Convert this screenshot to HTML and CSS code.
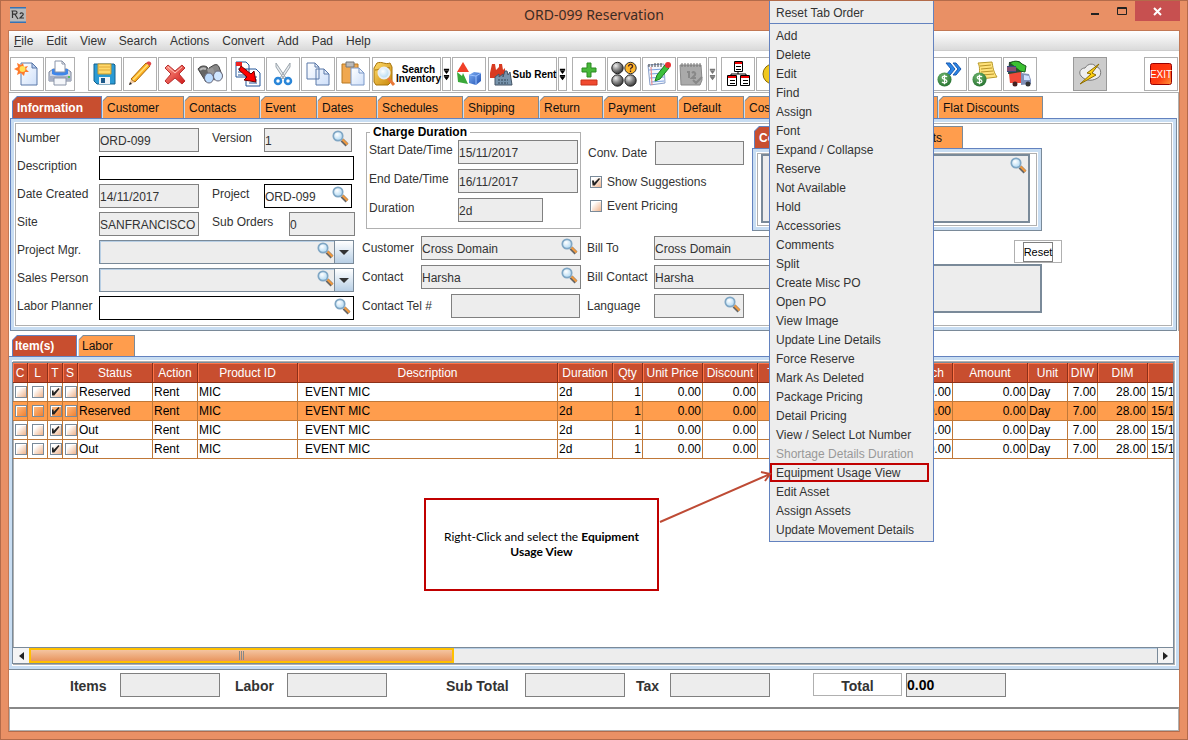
FILE: index.html
```html
<!DOCTYPE html>
<html lang="en">
<head>
<meta charset="utf-8">
<title>ORD-099 Reservation</title>
<link rel="stylesheet" href="styles.css">
</head>
<body>
<svg class="defs" aria-hidden="true">
  <defs>
    <linearGradient id="paper" x1="0" y1="0" x2="1" y2="1"><stop offset="0" stop-color="#fff"/><stop offset="1" stop-color="#cfe0fa"/></linearGradient>
    <linearGradient id="gold" x1="0" y1="0" x2="1" y2="1"><stop offset="0" stop-color="#ffdc6a"/><stop offset="1" stop-color="#c8860a"/></linearGradient>
    <linearGradient id="blue" x1="0" y1="0" x2="1" y2="1"><stop offset="0" stop-color="#7fb0f5"/><stop offset="1" stop-color="#1f4fb0"/></linearGradient>
    <linearGradient id="red" x1="0" y1="0" x2="1" y2="1"><stop offset="0" stop-color="#ff9a8a"/><stop offset="1" stop-color="#cf1818"/></linearGradient>
    <linearGradient id="exit" x1="0" y1="0" x2="1" y2="1"><stop offset="0" stop-color="#ff2a0a"/><stop offset=".6" stop-color="#ff3c12"/><stop offset="1" stop-color="#ff9a3a"/></linearGradient>
    <radialGradient id="ball" cx=".35" cy=".3" r=".75"><stop offset="0" stop-color="#eee"/><stop offset=".5" stop-color="#888"/><stop offset="1" stop-color="#333"/></radialGradient>
    <radialGradient id="green" cx=".4" cy=".3" r=".8"><stop offset="0" stop-color="#6fb56f"/><stop offset="1" stop-color="#1f6b2a"/></radialGradient>
    <radialGradient id="lens" cx=".4" cy=".35" r=".8"><stop offset="0" stop-color="#fff"/><stop offset="1" stop-color="#9fd0f0"/></radialGradient>
    <symbol id="find" viewBox="0 0 17 17"><path d="M10 10l5 5" stroke="#666" stroke-width="4"/><path d="M10.500 9.500l5 5" stroke="#f09a40" stroke-width="2.200"/><circle cx="6" cy="6" r="4.700" fill="url(#lens)" stroke="#7fa6c4" stroke-width="1.700"/></symbol>
    <symbol id="coin" viewBox="0 0 16 16"><circle cx="8" cy="8" r="7.500" fill="url(#green)"/><path d="M10.800 5.200C9 3.800 5.500 4.300 5.600 6.200c.1 2 5 1.300 5 3.600 0 2-3.500 2.300-5.300.8M8 3v10" fill="none" stroke="#fff" stroke-width="1.300"/></symbol>
  </defs>
</svg>
<main class="window">
  <header class="titlebar">
    <svg class="logo" viewBox="0 0 16 16"><path fill="#b9b9b9" d="M0 0h16v16H0z"/><path fill="#3573b5" d="M0 0h16v1.500H0zM0 14.500h16V16H0z"/><path d="M2.500 4v7M1.500 4h4c2 0 2 3 0 3.200H3M5 7.500l3 4.500M10 7c1-2 4-1 3 1l-3 3h4" fill="none" stroke="#333" stroke-width="1.200"/></svg>
    <h1 class="title">ORD-099 Reservation</h1>
    <div class="controls">
      <button class="ctl" aria-label="Minimize"><svg viewBox="0 0 27 20"><path fill="#222" d="M10 12h8v2h-8z"/></svg></button>
      <button class="ctl" aria-label="Maximize"><svg viewBox="0 0 27 20"><path fill="none" stroke="#222" d="M9.500 6.500h9v7h-9zM9.500 7.500h9"/></svg></button>
      <button class="ctl close" aria-label="Close"><svg viewBox="0 0 27 20"><path fill="none" stroke="#fff" stroke-width="2" d="M10 7l7 7M17 7l-7 7"/></svg></button>
    </div>
  </header>
  <div class="content">
    <nav class="menubar">
      <button><u>F</u>ile</button><button>Edit</button><button>View</button><button>Search</button><button>Actions</button><button>Convert</button><button>Add</button><button>Pad</button><button>Help</button>
    </nav>
    <div class="toolbar">
      <button class="tool" aria-label="New"><svg viewBox="0 0 32 32"><path d="M10 5h11l5 5v17H10z" fill="url(#paper)" stroke="#5a78a8"/><path d="M21 5v5h5z" fill="#b8cdf0" stroke="#5a78a8"/><path d="M12 5l1 4 4-1-2 3 3 3-4 0-1 4-3-3-4 2 1-4-4-2 4-2-1-4 4 2z" fill="#ff7a2a"/><circle cx="11.500" cy="11" r="3" fill="#ffe25a"/></svg></button>
      <button class="tool mid" aria-label="Print"><svg viewBox="0 0 28 32"><path d="M3 14l4-3h14l4 3v9H3z" fill="#d4d8e4" stroke="#7a8498"/><path d="M6 11h16v5c-4 2-12 2-16 0z" fill="#3f86ea"/><path d="M9 3h7l3 3v8H9z" fill="#fff" stroke="#8a94a8"/><path d="M16 3v3h3" fill="none" stroke="#8a94a8"/><path d="M3 18h22v5H3z" fill="#a8b0c4"/><path d="M8 20h12v7H8z" fill="#f4f6fa" stroke="#8a94a8"/><circle cx="23" cy="19" r="1" fill="#3c3"/></svg></button>
      <button class="tool g12" aria-label="Save"><svg viewBox="0 0 32 32"><path d="M5 6h20l1 1v19H8l-3-3z" fill="#2a9ad4" stroke="#14608c"/><path d="M9 6h13v10H9z" fill="#ffd96a" stroke="#c89a2a"/><path d="M10 9h11M10 12h11" stroke="#e0a83a"/><path d="M10 19h11v7H10z" fill="#f0f4f8"/><path d="M12 20h4v5h-4z" fill="#1f5a8a"/></svg></button>
      <button class="tool" aria-label="Edit"><svg viewBox="0 0 32 32"><path d="M5 27l2-6 4 3z" fill="#f0c8a0"/><path d="M5 27l1-3 2 2z" fill="#222"/><path d="M7 21L22 5l4 3-15 16z" fill="#ffb020" stroke="#a86a10"/><path d="M9 22L24 6.500" stroke="#ffe27a" stroke-width="1.500"/><path d="M22 5l2-1.500c2-.5 4 1.500 3 3L26 8z" fill="#e04848"/></svg></button>
      <button class="tool" aria-label="Delete"><svg viewBox="0 0 32 32"><path d="M9 7l7 6 7-6 3 3-6 6 6 7-3 3-7-6-7 6-3-3 6-7-6-6z" fill="url(#red)" stroke="#b83030"/><path d="M9 9l7 6 7-6" fill="none" stroke="#ffc2b8"/></svg></button>
      <button class="tool" aria-label="Find"><svg viewBox="0 0 32 32"><path d="M4 11c2-3 6-4 9-2l5 9-6 6z" fill="#666" stroke="#444"/><path d="M15 10l5-3c3-1 4 0 5 2l3 8-8 5z" fill="#888" stroke="#444"/><path d="M13 11l6-1 2 6-6 3z" fill="#999"/><ellipse cx="15" cy="20" rx="4.500" ry="5" fill="#bcdcff" stroke="#667"/><ellipse cx="24" cy="18" rx="4.500" ry="5" fill="#cfe6ff" stroke="#667"/><path d="M6 12c2-2 4-2 6-1" fill="none" stroke="#bbb" stroke-width="2"/></svg></button>
      <button class="tool g3" aria-label="Convert"><svg viewBox="0 0 32 32"><path d="M4 4h10l3 3v12H4zM14 11h10l4 4v13H14z" fill="#fff" stroke="#24569a"/><path d="M4 4h6v4H4z" fill="#e22"/><path d="M6 11h8M6 14h8M6 17h8M17 19h8M17 22h8M17 25h8" stroke="#24569a"/><path d="M9 8l10 8 3-3 2 11-12-2 3-3-8-7z" fill="#f00" stroke="#600"/></svg></button>
      <button class="tool" aria-label="Cut"><svg viewBox="0 0 32 32"><path d="M9 5l10 15-2 1L9 9zM23 5L13 20l2 1 8-12z" fill="#e8ecf0" stroke="#9aa4ac"/><ellipse cx="11" cy="23" rx="3" ry="3" fill="none" stroke="#2a86d8" stroke-width="2.500"/><ellipse cx="21" cy="23" rx="3" ry="3" fill="none" stroke="#2a86d8" stroke-width="2.500"/></svg></button>
      <button class="tool" aria-label="Copy"><svg viewBox="0 0 32 32"><path d="M5 5h8l4 4v12H5zM14 11h8l5 5v11H14z" fill="url(#paper)" stroke="#5a78a8"/><path d="M13 5v4h4M22 11v5h5" fill="none" stroke="#5a78a8"/></svg></button>
      <button class="tool" aria-label="Paste"><svg viewBox="0 0 32 32"><path d="M5 6h16v19H5z" fill="#f0a850" stroke="#b87820"/><path d="M9 4h8v5H9z" fill="#bbb" stroke="#777"/><path d="M14 10h8l5 5v12H14z" fill="url(#paper)" stroke="#7a98c8"/><path d="M22 10v5h5" fill="none" stroke="#7a98c8"/></svg></button>
      <button class="tool wide g1"><svg viewBox="0 0 24 32"><path d="M2 10l3-5c5-2 8 2 13 0l2 4v14l-4 4H4l-2-3z" fill="url(#gold)" stroke="#a8740a"/><path d="M3 12c4 0 6-3 15-2" fill="none" stroke="#a8740a"/><path d="M16 20l6 7" stroke="#e87838" stroke-width="3"/><circle cx="12" cy="15" r="5.500" fill="url(#lens)" stroke="#e8eef4" stroke-width="2"/></svg><span>Search<br>Inventory</span></button>
      <button class="tool arrow" aria-label="Inventory options"><svg viewBox="0 0 8 32"><path d="M1 10h6v2H1zM1 17h6v2H1z"/><path d="M1 12h6l-3 4zM1 19h6l-3 4z"/></svg></button>
      <button class="tool" aria-label="Shapes"><svg viewBox="0 0 32 32"><path d="M10 4l6 10H4z" fill="#f04028"/><path d="M4 14l5 4 1-3 5 11-10-2z" fill="#3aa83a"/><path d="M16 17l5-3 7 1v8l-5 4-7-2z" fill="url(#blue)"/><path d="M16 17l7 1 5-3M23 18v9" stroke="#9ac0ff" fill="none"/></svg></button>
      <button class="tool wide g1"><svg viewBox="0 0 24 32"><path d="M1 20V15l2-9h3l1 6 3-3V6h3l1 6 2-2v10z" fill="#d83a20"/><path d="M6 27V19l4-3v3l4-3v3l2-6h2l1 4 2-3 2 13z" fill="#7894ac" stroke="#456"/><path d="M9 22h10M9 25h10" stroke="#345" stroke-dasharray="2 1"/></svg><span>Sub Rent</span></button>
      <button class="tool arrow" aria-label="Sub rent options"><svg viewBox="0 0 8 32"><path d="M1 10h6v2H1zM1 17h6v2H1z"/><path d="M1 12h6l-3 4zM1 19h6l-3 4z"/></svg></button>
      <button class="tool g4" aria-label="Add or remove"><svg viewBox="0 0 32 32"><path d="M14 5h4v5h5v4h-5v5h-4v-5H9v-4h5z" fill="#48b83a" stroke="#2a8a20"/><path d="M8 22h16v5H8z" fill="#f04a30" stroke="#c83018"/></svg></button>
      <button class="tool" aria-label="Availability"><svg viewBox="0 0 32 32"><g fill="url(#ball)" stroke="#222"><circle cx="9.500" cy="10" r="5.700"/><circle cx="9.500" cy="22.500" r="5.700"/><circle cx="22.500" cy="22.500" r="5.700"/></g><circle cx="22.500" cy="10" r="5.700" fill="#ffb62a" stroke="#333"/><path d="M20.500 8.500c0-3 4.500-2.500 4 0-.3 1.500-2 1.200-2 3M22.500 12.500V14" fill="none" stroke="#422" stroke-width="1.300"/></svg></button>
      <button class="tool" aria-label="Notes"><svg viewBox="0 0 32 32"><path d="M5 7l16-1 1 19-15 2z" fill="#f4f8ff" stroke="#8aa0c8"/><path d="M6 12l15-1M7 16l14-1M7 20l14-1M8 24l13-1" stroke="#7aa0e0"/><path d="M6 6v3M9 6v3M12 5v4M15 5v4M18 5v4" stroke="#444"/><path d="M8 9l1 18" stroke="#f08080"/><path d="M12 23l2-6 8-10 4 3-9 11z" fill="#3cc03c" stroke="#1a7a1a"/><circle cx="25" cy="7" r="3" fill="#e83030"/></svg></button>
      <button class="tool mid" aria-label="Calendar" disabled><svg viewBox="0 0 28 32"><path d="M2 7h21l1 15-2 5H3z" fill="#aaa" stroke="#888"/><path d="M4 5v4M7 5v4M10 5v4M13 5v4M16 5v4M19 5v4M22 5v4" stroke="#777"/><path d="M9 14h2v6M14 15c2-2 4 0 3 2l-3 3h4M15 22l3 3 6-6" fill="none" stroke="#888" stroke-width="2"/></svg></button>
      <button class="tool arrow off" aria-label="Calendar options" disabled><svg viewBox="0 0 8 32"><path d="M1 10h6v2H1zM1 17h6v2H1z"/><path d="M1 12h6l-3 4zM1 19h6l-3 4z"/></svg></button>
      <button class="tool g3" aria-label="Hierarchy"><svg viewBox="0 0 32 32"><path d="M16 13v3M9 18v-2h15v2" fill="none" stroke="#000"/><path d="M12.500 3.500h8v10h-8zM5.500 17.500h9v10h-9zM18.500 17.500h9v10h-9z" fill="#fff" stroke="#000"/><path d="M13 4h7v2h-7zM6 18h8v2H6zM19 18h8v2h-8z" fill="#e00"/><path d="M14 8.500h5M14 11.500h5M8 22.500h5M8 25.500h5M21 22.500h5M21 25.500h5" stroke="#000"/></svg></button>
      <button class="tool" aria-label="Costs"><svg viewBox="0 0 32 32"><circle cx="16" cy="16" r="10" fill="#f0c820" stroke="#8a6a00"/></svg></button>
      <span class="spacer"></span>
      <button class="tool" aria-label="Transfer charges"><svg viewBox="0 0 32 32"><path d="M12 5h4l5 6-5 6h-4l5-6zM19 5h3l5 6-5 6h-3l5-6z" fill="#2a86e8" stroke="#1a5ab0"/><use href="#coin" x="3" y="14" width="15" height="15"/></svg></button>
      <button class="tool" aria-label="Price list"><svg viewBox="0 0 32 32"><path d="M9 5l14-1c1 5 1 9 5 15l-16 2c-3-6 0-11-3-16z" fill="#ffe27a" stroke="#b89a2a"/><path d="M11 8l11-1M12 11l11-1M12 14l12-1M13 17l12-1" stroke="#b8942a"/><use href="#coin" x="3" y="14" width="15" height="15"/></svg></button>
      <button class="tool" aria-label="Shipping"><svg viewBox="0 0 32 32"><path d="M5 4l10-1 5 5-3 8H4z" fill="#2a4a3a"/><path d="M6 5c5-3 9-2 12 1l4 2-1 6-5-1z" fill="#3ac030" stroke="#1a5a1a"/><path d="M3 8h9v6H3z" fill="#334a80"/><path d="M3 10h9M3 12h9" stroke="#e05060"/><path d="M5 16l12-2v11H6z" fill="#f04a3a"/><path d="M17 15l8 1 2 6v4l-10 1z" fill="#8090b8"/><path d="M20 17l5 1 1 4h-6z" fill="#cfe0ff"/><circle cx="11" cy="26" r="2.500" fill="#422"/><circle cx="24" cy="26" r="2.500" fill="#333"/></svg></button>
      <button class="tool pressed g35" aria-label="Refresh"><svg viewBox="0 0 32 32"><path d="M7 18c-3-4 0-8 4-8 3-5 9-5 11-1 5 0 6 7 3 10-5 4-13 5-18-1z" fill="#eee" stroke="#777"/><path d="M25 6L13 15l4 1-11 10 16-9-4-2z" fill="#ffd010" stroke="#8a6a00"/></svg></button>
      <button class="tool g36" aria-label="Exit"><svg viewBox="0 0 32 32"><rect x="5.500" y="5.500" width="21" height="21" rx="2" fill="url(#exit)" stroke="#900"/><text x="16" y="20" class="exit-text">EXIT</text></svg></button>
    </div>

    <section class="upper">
      <div class="tabs main-tabs" role="tablist">
        <button class="tab active w90">Information</button><button class="tab w82">Customer</button><button class="tab w76">Contacts</button><button class="tab w57">Event</button><button class="tab w60">Dates</button><button class="tab w86">Schedules</button><button class="tab w76">Shipping</button><button class="tab w64">Return</button><button class="tab w75">Payment</button><button class="tab w66">Default</button><button class="tab w96">Costs</button><button class="tab w98" aria-label="More"></button><button class="tab w105">Flat Discounts</button>
      </div>
      <div class="panel form">
        <div class="col-left">
          <div class="row"><label for="number">Number</label><input id="number" class="box w100" value="ORD-099" readonly><label class="second" for="version">Version</label><div class="box pick w88"><input id="version" value="1" readonly><svg><use href="#find"/></svg></div></div>
          <div class="row"><label for="desc">Description</label><input id="desc" class="box edit wfull"></div>
          <div class="row"><label for="created">Date Created</label><input id="created" class="box w100" value="14/11/2017" readonly><label class="second" for="project">Project</label><div class="box edit pick w88"><input id="project" value="ORD-099"><svg><use href="#find"/></svg></div></div>
          <div class="row"><label for="site">Site</label><input id="site" class="box w100" value="SANFRANCISCO" readonly><label class="second third" for="sub">Sub Orders</label><input id="sub" class="box w66" value="0" readonly></div>
          <div class="row"><label for="mgr">Project Mgr.</label><div class="box pick combo wfull"><input id="mgr" readonly><svg><use href="#find"/></svg><button class="drop" aria-label="Choose project manager"></button></div></div>
          <div class="row"><label for="sales">Sales Person</label><div class="box pick combo wfull"><input id="sales" readonly><svg><use href="#find"/></svg><button class="drop" aria-label="Choose sales person"></button></div></div>
          <div class="row"><label for="planner">Labor Planner</label><div class="box edit pick wfull"><input id="planner"><svg><use href="#find"/></svg></div></div>
        </div>
        <div class="col-right">
          <div class="top">
            <fieldset class="charge"><legend>Charge Duration</legend>
              <div class="row"><label for="start">Start Date/Time</label><input id="start" class="box w120" value="15/11/2017" readonly></div>
              <div class="row"><label for="end">End Date/Time</label><input id="end" class="box w120" value="16/11/2017" readonly></div>
              <div class="row"><label for="dur">Duration</label><input id="dur" class="box w85" value="2d" readonly></div>
            </fieldset>
            <div class="options">
              <div class="row conv"><label for="conv">Conv. Date</label><input id="conv" class="box w89" readonly></div>
              <label class="check"><input type="checkbox" checked>Show Suggestions</label>
              <label class="check"><input type="checkbox">Event Pricing</label>
            </div>
            <div class="comments">
              <div class="tabs"><button class="tab active w66">Com.</button><button class="tab w143 end">Events</button></div>
              <div class="panel notes"><div class="area"><textarea aria-label="Comments" readonly></textarea><svg><use href="#find"/></svg></div></div>
            </div>
          </div>
          <div class="bottom">
            <div class="cust">
              <div class="row"><label for="cust">Customer</label><div class="box pick w160"><input id="cust" value="Cross Domain" readonly><svg><use href="#find"/></svg></div></div>
              <div class="row"><label for="contact">Contact</label><div class="box pick w160"><input id="contact" value="Harsha" readonly><svg><use href="#find"/></svg></div></div>
              <div class="row"><label class="long" for="tel">Contact Tel #</label><input id="tel" class="box w129" readonly></div>
            </div>
            <div class="bill">
              <div class="row"><label for="bill">Bill To</label><input id="bill" class="box w160" value="Cross Domain" readonly></div>
              <div class="row"><label for="billc">Bill Contact</label><input id="billc" class="box w160" value="Harsha" readonly></div>
              <div class="row"><label for="lang">Language</label><div class="box pick w90"><input id="lang" readonly><svg><use href="#find"/></svg></div></div>
            </div>
            <div class="extra">
              <button class="reset"><span>Reset</span></button>
              <textarea class="memo" aria-label="Memo" readonly></textarea>
            </div>
          </div>
        </div>
      </div>
    </section>

    <section class="lower">
      <div class="tabs"><button class="tab active w65">Item(s)</button><button class="tab w57">Labor</button></div>
      <div class="panel items">
        <div class="viewport">
          <table class="grid">
            <colgroup><col class="c15"><col class="c20"><col class="c15"><col class="c15"><col class="c75"><col class="c45"><col class="c100"><col class="c260"><col class="c55"><col class="c30"><col class="c60"><col class="c55"><col class="c45"><col class="c75"><col class="c75"><col class="c75"><col class="c40"><col class="c30"><col class="c50"><col class="c75"></colgroup>
            <thead><tr><th>C</th><th>L</th><th>T</th><th>S</th><th>Status</th><th>Action</th><th>Product ID</th><th>Description</th><th>Duration</th><th>Qty</th><th>Unit Price</th><th>Discount</th><th>Total</th><th></th><th>Price Each</th><th>Amount</th><th>Unit</th><th>DIW</th><th>DIM</th><th></th></tr></thead>
            <tbody>
              <tr><td><input type="checkbox" aria-label="C"></td><td><input type="checkbox" aria-label="L"></td><td><input type="checkbox" aria-label="T" checked></td><td><input type="checkbox" aria-label="S"></td><td>Reserved</td><td>Rent</td><td>MIC</td><td class="indent">EVENT MIC</td><td>2d</td><td class="n">1</td><td class="n">0.00</td><td class="n">0.00</td><td></td><td></td><td class="n">0.00</td><td class="n">0.00</td><td>Day</td><td class="n">7.00</td><td class="n">28.00</td><td class="date">15/11/2017</td></tr>
              <tr class="selected"><td><input type="checkbox" aria-label="C"></td><td><input type="checkbox" aria-label="L"></td><td><input type="checkbox" aria-label="T" checked></td><td><input type="checkbox" aria-label="S"></td><td>Reserved</td><td>Rent</td><td>MIC</td><td class="indent">EVENT MIC</td><td>2d</td><td class="n">1</td><td class="n">0.00</td><td class="n">0.00</td><td></td><td></td><td class="n">0.00</td><td class="n">0.00</td><td>Day</td><td class="n">7.00</td><td class="n">28.00</td><td class="date">15/11/2017</td></tr>
              <tr><td><input type="checkbox" aria-label="C"></td><td><input type="checkbox" aria-label="L"></td><td><input type="checkbox" aria-label="T" checked></td><td><input type="checkbox" aria-label="S"></td><td>Out</td><td>Rent</td><td>MIC</td><td class="indent">EVENT MIC</td><td>2d</td><td class="n">1</td><td class="n">0.00</td><td class="n">0.00</td><td></td><td></td><td class="n">0.00</td><td class="n">0.00</td><td>Day</td><td class="n">7.00</td><td class="n">28.00</td><td class="date">15/11/2017</td></tr>
              <tr><td><input type="checkbox" aria-label="C"></td><td><input type="checkbox" aria-label="L"></td><td><input type="checkbox" aria-label="T" checked></td><td><input type="checkbox" aria-label="S"></td><td>Out</td><td>Rent</td><td>MIC</td><td class="indent">EVENT MIC</td><td>2d</td><td class="n">1</td><td class="n">0.00</td><td class="n">0.00</td><td></td><td></td><td class="n">0.00</td><td class="n">0.00</td><td>Day</td><td class="n">7.00</td><td class="n">28.00</td><td class="date">15/11/2017</td></tr>
            </tbody>
          </table>
        </div>
        <div class="scroll">
          <button class="step left" aria-label="Scroll left"></button>
          <div class="track"><div class="thumb"><i></i><i></i><i></i></div></div>
          <button class="step right" aria-label="Scroll right"></button>
        </div>
      </div>
    </section>

    <footer class="totals">
      <label for="t1">Items</label><input id="t1" class="box w100" readonly>
      <label for="t2" class="lab">Labor</label><input id="t2" class="box w100" readonly>
      <label for="t3" class="subt">Sub Total</label><input id="t3" class="box w100" readonly>
      <label for="t4" class="tax">Tax</label><input id="t4" class="box w100" readonly>
      <button class="total">Total</button><input class="box w100 sum" aria-label="Total" value="0.00" readonly>
    </footer>
    <div class="status"></div>
  </div>

  <ul class="context" role="menu">
    <li class="first"><button>Reset Tab Order</button></li>
    <li><button>Add</button></li><li><button>Delete</button></li><li><button>Edit</button></li><li><button>Find</button></li><li><button>Assign</button></li><li><button>Font</button></li><li><button>Expand / Collapse</button></li><li><button>Reserve</button></li><li><button>Not Available</button></li><li><button>Hold</button></li><li><button>Accessories</button></li><li><button>Comments</button></li><li><button>Split</button></li><li><button>Create Misc PO</button></li><li><button>Open PO</button></li><li><button>View Image</button></li><li><button>Update Line Details</button></li><li><button>Force Reserve</button></li><li><button>Mark As Deleted</button></li><li><button>Package Pricing</button></li><li><button>Detail Pricing</button></li><li><button>View / Select Lot Number</button></li><li><button disabled>Shortage Details Duration</button></li><li class="marked"><button>Equipment Usage View</button></li><li><button>Edit Asset</button></li><li><button>Assign Assets</button></li><li><button>Update Movement Details</button></li>
  </ul>
  <svg class="pointer" viewBox="0 0 114 56"><path d="M1 53L111 5M102 3l9 2-5 7" fill="none" stroke="#be4b35" stroke-width="2"/></svg>
  <p class="callout">Right-Click and select the <b>Equipment Usage View</b></p>
</main>
</body>
</html>
```

FILE: styles.css
```css
* { box-sizing: border-box; }
body { margin: 0; font: 12px/14px "Liberation Sans", Arial, sans-serif; color: #333; }
button, input, textarea { font: inherit; color: inherit; margin: 0; padding: 0; border: 0; border-radius: 0; background: none; }
input, textarea { min-width: 0; outline: 0; resize: none; }
button { white-space: nowrap; }
svg { display: block; }
.defs { position: absolute; width: 0; height: 0; }

.window { position: relative; display: flex; flex-direction: column; min-height: 100vh; padding: 0 7px 7px; background: #e99065; border: 1px solid #b36b4a; overflow: hidden; }
.titlebar { display: grid; grid-template-columns: 99px 1fr 99px; align-items: start; height: 29px; }
.logo { width: 16px; height: 16px; margin: 6px 2px; }
.title { margin: 4px 0 0; text-align: center; font: 15px/20px "Noto Sans", "Open Sans", sans-serif; font-size: 14px; color: #3b2b24; }
.controls { display: flex; }
.ctl { width: 27px; height: 20px; }
.ctl svg { height: 20px; width: 27px; margin: 0 auto; }
.close { width: 45px; background: #c75050; flex: none; }
.content { display: flex; flex-direction: column; flex: 1; background: #fff; border: 1px solid #c27854; border-bottom-color: #b36b4a; }

.menubar { display: flex; gap: 13px; padding: 0 5px; height: 20px; background: linear-gradient(#fff, #dadada); border-bottom: 1px solid #ccc; }
.toolbar { display: flex; gap: 1px; padding: 6px 1px 0; height: 42px; border-bottom: 1px solid #b0b0b0; }
.tool { display: flex; align-items: center; justify-content: center; flex: none; width: 34px; height: 34px; border: 1px solid #b0b0b0; }
.tool svg { width: 32px; height: 32px; flex: none; }
.mid { width: 30px; }
.mid svg { width: 28px; }
.wide { width: 69px; font: bold 10px/9px "Liberation Sans", Arial, sans-serif; color: #000; }
.wide svg { width: 24px; height: 32px; }
.wide span { flex: 1; text-align: center; }
.arrow { width: 9px; }
.arrow svg { width: 7px; }
.off { fill: #777; }
.g1 { margin-left: 1px; }
.g3 { margin-left: 3px; }
.g4 { margin-left: 4px; }
.g12 { margin-left: 12px; }
.g35 { margin-left: 35px; }
.g36 { margin-left: 36px; }
.spacer { flex: 1; }
.pressed { background: #ccc; border-color: #999; }
.exit-text { font: 10px "Liberation Sans", Arial, sans-serif; fill: #fff; text-anchor: middle; }

.upper { padding: 3px 1px 0; border-right: 1px solid #b0b0b0; }
.tabs { display: flex; padding-left: 2px; }
.tab { flex: none; height: 22px; padding: 0 0 0 4px; text-align: left; color: #111; border: 1px solid #7a8a99; border-bottom: 0; border-left-color: #c8ddf2; background: linear-gradient(135deg, #7a8a99 4px, #ff9d4d 5px) border-box; clip-path: polygon(0 5px, 5px 0, 100% 0, 100% 100%, 0 100%); }
.active { font-weight: bold; color: #fff; border-color: #6382bf; background: linear-gradient(135deg, #6382bf 4px, #c84e2f 5px) border-box; }
.panel { border: 1px solid #6382bf; border-right-color: #7a8a99; border-bottom-color: #7a8a99; background: #fff; box-shadow: inset 0 0 0 3px #c8ddf2, inset 0 0 0 4px #fff, inset 0 0 0 5px #b0b0b0; }
.form { display: flex; gap: 6px; height: 213px; padding: 6px 5px 0; }
.col-left { display: flex; flex-direction: column; gap: 4px; width: 340px; padding-top: 3px; flex: none; }
.row { display: flex; align-items: flex-start; height: 24px; }
.row label { flex: none; width: 83px; padding: 3px 0 0 1px; white-space: nowrap; }
.row .second { width: 52px; margin-left: 13px; padding-left: 0; }
.row .third { width: 77px; }
.box { flex: none; height: 24px; padding: 2px 0 0; background: #ededed; border: 1px solid #808080; }
.edit { background: #fff; border-color: #000; }
.pick { display: flex; padding: 0; }
.pick input { flex: 1; padding-top: 2px; }
.pick svg { width: 17px; height: 17px; margin: 1px 2px 0 0; flex: none; }
.combo { border-color: #7a8a99; box-shadow: inset 1px 1px #b8cfe5; }
.combo svg { margin-right: 0; }
.drop { width: 19px; border-left: 1px solid #7a8a99; background: linear-gradient(#fff, #b8cfe5); display: flex; align-items: center; justify-content: center; }
.drop::before { content: ""; border: 5px solid transparent; border-top-color: #333; border-bottom: 0; }
.w57 { width: 57px; } .w60 { width: 60px; } .w64 { width: 64px; } .w65 { width: 65px; } .w66 { width: 66px; } .w75 { width: 75px; } .w76 { width: 76px; } .w82 { width: 82px; } .w85 { width: 85px; } .w86 { width: 86px; } .w88 { width: 88px; } .w89 { width: 89px; } .w90 { width: 90px; } .w96 { width: 96px; } .w98 { width: 98px; } .w100 { width: 100px; } .w105 { width: 105px; } .w120 { width: 120px; } .w129 { width: 129px; } .w143 { width: 143px; } .w160 { width: 160px; }
.wfull { width: 255px; }

.col-right { flex: 1; min-width: 0; }
.top { display: flex; height: 111px; }
.charge { width: 215px; height: 104px; margin: 0 0 0 4px; padding: 0 0 0 1px; border: 1px solid #b0b0b0; }
.charge legend { margin-left: 2px; padding: 0 3px; line-height: 14px; font-weight: bold; color: #000; }
.charge .row { margin-bottom: 5px; }
.charge label { width: 90px; }
.charge .row:first-of-type { margin-top: 1px; }
.options { width: 171px; padding: 16px 0 0 7px; }
.conv label { width: 67px; padding: 5px 0 0; }
.check { display: flex; align-items: center; gap: 5px; height: 24px; padding-left: 2px; }
.conv + .check { margin-top: 5px; }
input[type="checkbox"] { appearance: none; flex: none; width: 12px; height: 12px; border: 1px solid #7a8a99; background: linear-gradient(135deg, #fff 25%, #f0b48c); box-shadow: inset 1px 1px #fff; }
input[type="checkbox"]:checked::before { content: ""; display: block; width: 8px; height: 8px; margin: 1px; background: #222; clip-path: polygon(0 30%, 25% 30%, 28% 58%, 88% 0, 100% 12%, 35% 95%, 8% 95%); }
.comments { width: 290px; padding-top: 1px; }
.end { text-align: right; padding-right: 20px; }
.notes { height: 83px; padding: 5px 11px 0 8px; }
.area { position: relative; height: 69px; border: 2px solid #7a8a99; background: #ededed; }
.area textarea { display: block; width: 100%; height: 100%; }
.area svg { position: absolute; top: 1px; right: 1px; width: 17px; height: 17px; }
.bottom { display: flex; }
.cust, .bill { display: flex; flex-direction: column; gap: 5px; }
.cust { width: 225px; }
.cust label { width: 59px; padding: 5px 0 0; }
.cust .long { width: 89px; }
.bill label { width: 67px; padding: 5px 0 0; }
.extra { flex: none; width: 248px; padding-top: 4px; display: flex; flex-direction: column; }
.reset { align-self: flex-end; width: 48px; height: 23px; margin-bottom: 1px; display: flex; align-items: center; justify-content: center; border: 1px solid #b0b0b0; color: #000; }
.reset span { border: 1px solid #808080; height: 20px; padding: 2px 0; font: 11px/15px "Liberation Sans", Arial, sans-serif; }
.memo { width: 228px; height: 49px; background: #ededed; border: 2px solid #7a8a99; }

.lower { display: flex; flex-direction: column; flex: 1; margin-top: 4px; }
.lower .tabs { padding-left: 3px; }
.lower .tab { height: 21px; padding-left: 2px; }
.lower .tab + .tab { margin-left: 1px; padding-left: 3px; }
.items { display: flex; flex-direction: column; flex: 1; padding: 5px 5px 5px 3px; border-width: 1px 0; }
.viewport { flex: 1; width: 100%; overflow: hidden; border: 1px solid #7a8a99; border-bottom: 0; }
.grid { table-layout: fixed; width: 1210px; border-collapse: separate; border-spacing: 0; color: #000; }
.grid th { height: 20px; padding: 0; font-weight: normal; color: #fff; background: #c84e2f; border: 1px solid #8c3018; border-width: 0 1px 1px 0; box-shadow: inset 1px 1px #ff7448; white-space: nowrap; }
.grid td { height: 19px; padding: 0 0 0 1px; border: 1px solid #c07838; border-width: 0 1px 1px 0; white-space: nowrap; overflow: hidden; }
.grid td input { display: block; margin: 0 auto; }
.grid .n { text-align: right; padding: 0 1px 0 0; }
.grid .indent { padding-left: 7px; }
.grid .date { padding-left: 3px; }
.selected { background: #ff9d4d; }
.selected input[type="checkbox"] { background: linear-gradient(135deg, #ffc08a, #f08030); }
.c15 { width: 15px; } .c20 { width: 20px; } .c30 { width: 30px; } .c40 { width: 40px; } .c45 { width: 45px; } .c50 { width: 50px; } .c55 { width: 55px; } .c60 { width: 60px; } .c75 { width: 75px; } .c100 { width: 100px; } .c260 { width: 260px; }
.scroll { display: flex; height: 17px; border: 1px solid #7a8a99; background: #ededed; }
.step { width: 16px; display: flex; align-items: center; justify-content: center; background: #f4f4f4; }
.step::before { content: ""; border: 4px solid transparent; }
.left::before { border-right: 5px solid #222; border-left: 0; }
.right { border-left: 1px solid #7a8a99; }
.right::before { border-left: 5px solid #222; border-right: 0; }
.track { flex: 1; display: flex; box-shadow: inset 0 1px #b8cfe5; }
.thumb { width: 425px; display: flex; gap: 1px; align-items: center; justify-content: center; border: 2px solid #ffc000; background: linear-gradient(#f4c4a0, #e8955f); }
.thumb i { width: 1px; height: 9px; background: #888; }

.totals { display: flex; align-items: flex-start; height: 37px; padding: 3px 0 0 61px; font: bold 14px/16px "Liberation Sans", Arial, sans-serif; }
.totals label { width: 50px; padding-top: 5px; white-space: nowrap; }
.totals .lab { width: 52px; margin-left: 15px; }
.totals .subt { width: 79px; margin-left: 59px; }
.totals .tax { width: 34px; margin-left: 11px; }
.total { width: 89px; height: 23px; margin: 0 4px 0 43px; padding-top: 2px; border: 1px solid #b0b0b0; }
.sum { padding: 0; color: #000; }
.status { height: 24px; border: 1px solid #b0b0b0; border-top: 2px solid #888; }

.context { position: absolute; left: 768px; top: -1px; width: 165px; margin: 0; padding: 0 0 2px; list-style: none; background: #ededed; border: 1px solid #6382bf; }
.context li { height: 19px; }
.context button { display: block; width: 100%; height: 19px; padding: 0 0 0 6px; text-align: left; }
.context button:disabled { color: #999; }
.context .first { height: 23px; padding-top: 2px; margin-bottom: 2px; border-bottom: 1px solid #6382bf; }
.context .marked { width: 159px; box-shadow: inset 0 0 0 2px #c00000; }
.pointer { position: absolute; left: 658px; top: 468px; width: 114px; height: 56px; }
.callout { position: absolute; left: 423px; top: 497px; width: 235px; height: 93px; margin: 0; padding: 29px 10px; border: 2px solid #c00000; background: #fff; color: #000; text-align: center; font: 12px/15px Lato, "Open Sans", sans-serif; }
```
